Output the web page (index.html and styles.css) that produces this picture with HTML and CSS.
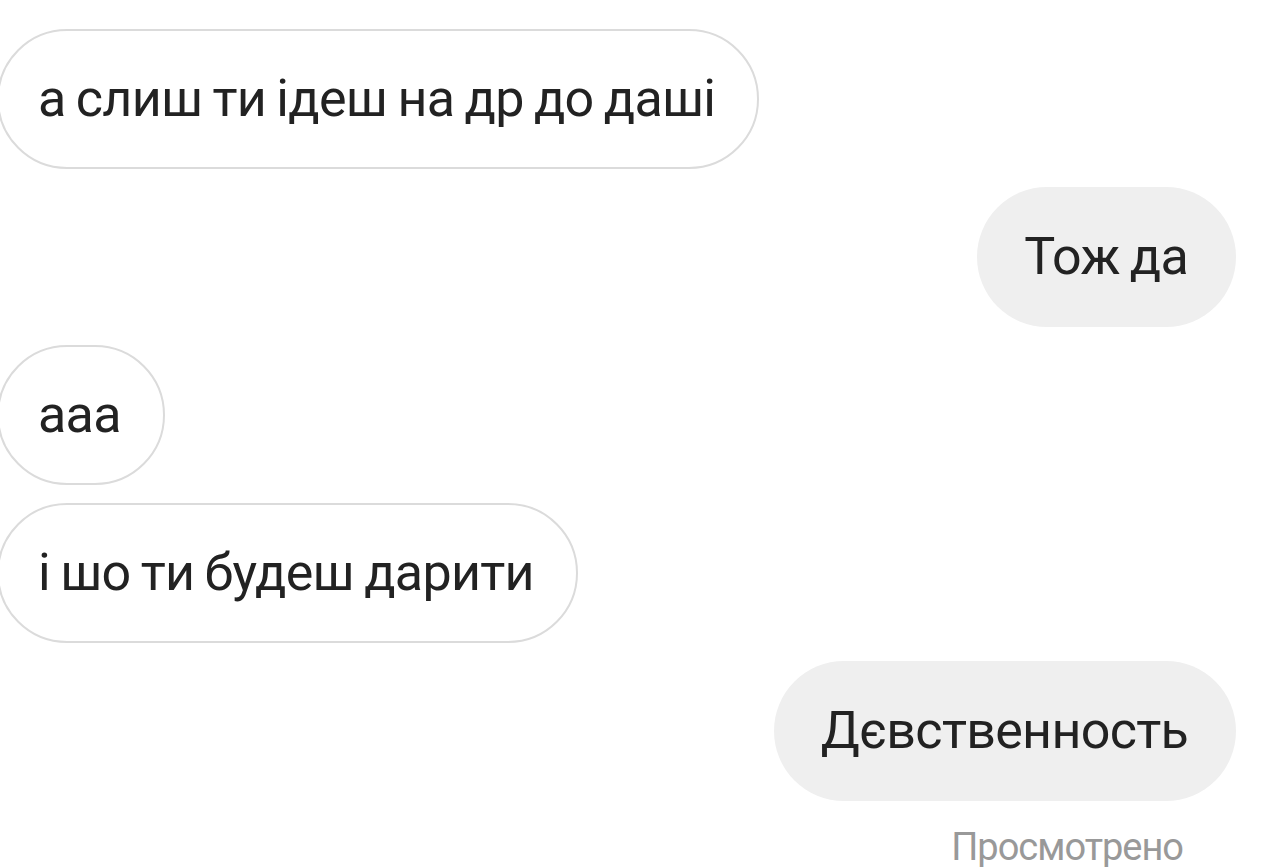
FILE: index.html
```html
<!DOCTYPE html>
<html lang="uk">
<head>
  <meta charset="UTF-8" />
  <meta name="viewport" content="width=device-width, initial-scale=1.0"/>
  <title>Чат</title>
  <link rel="stylesheet" href="styles.css">
</head>
<body>
  <div class="chat">
    <div class="msg in">а слиш ти ідеш на др до даші</div>
    <div class="msg out">Тож да</div>
    <div class="msg in">ааа</div>
    <div class="msg in">і шо ти будеш дарити</div>
    <div class="msg out">Дєвственность</div>
    <div class="seen">Просмотрено</div>
  </div>
</body>
</html>
```

FILE: styles.css
```css
body {
  margin: 0;
  font-family: Roboto, 'Noto Sans', sans-serif;
  background-color: #fff;
  color: #222;
  overflow: hidden;
}

.chat {
  display: flex;
  flex-direction: column;
  gap: 18px;
  padding-top: 29px;
}

.msg {
  box-sizing: border-box;
  height: 140px;
  display: flex;
  align-items: center;
  padding: 0 42px 0 39px;
  border-radius: 70px;
  font-size: 52px;
  line-height: 60px;
  letter-spacing: -0.7px;
  word-spacing: -2px;
  white-space: nowrap;
}

.msg.in {
  align-self: flex-start;
  margin-left: -3px;
  border: 2px solid #dbdbdb;
  background-color: #fff;
}

.msg.out {
  align-self: flex-end;
  margin-right: 44px;
  padding: 0 48px 0 47px;
  background-color: #efefef;
}

.seen {
  align-self: flex-end;
  margin-right: 97px;
  margin-top: 8px;
  font-size: 38px;
  line-height: 40px;
  letter-spacing: -1px;
  color: #999;
}
```
